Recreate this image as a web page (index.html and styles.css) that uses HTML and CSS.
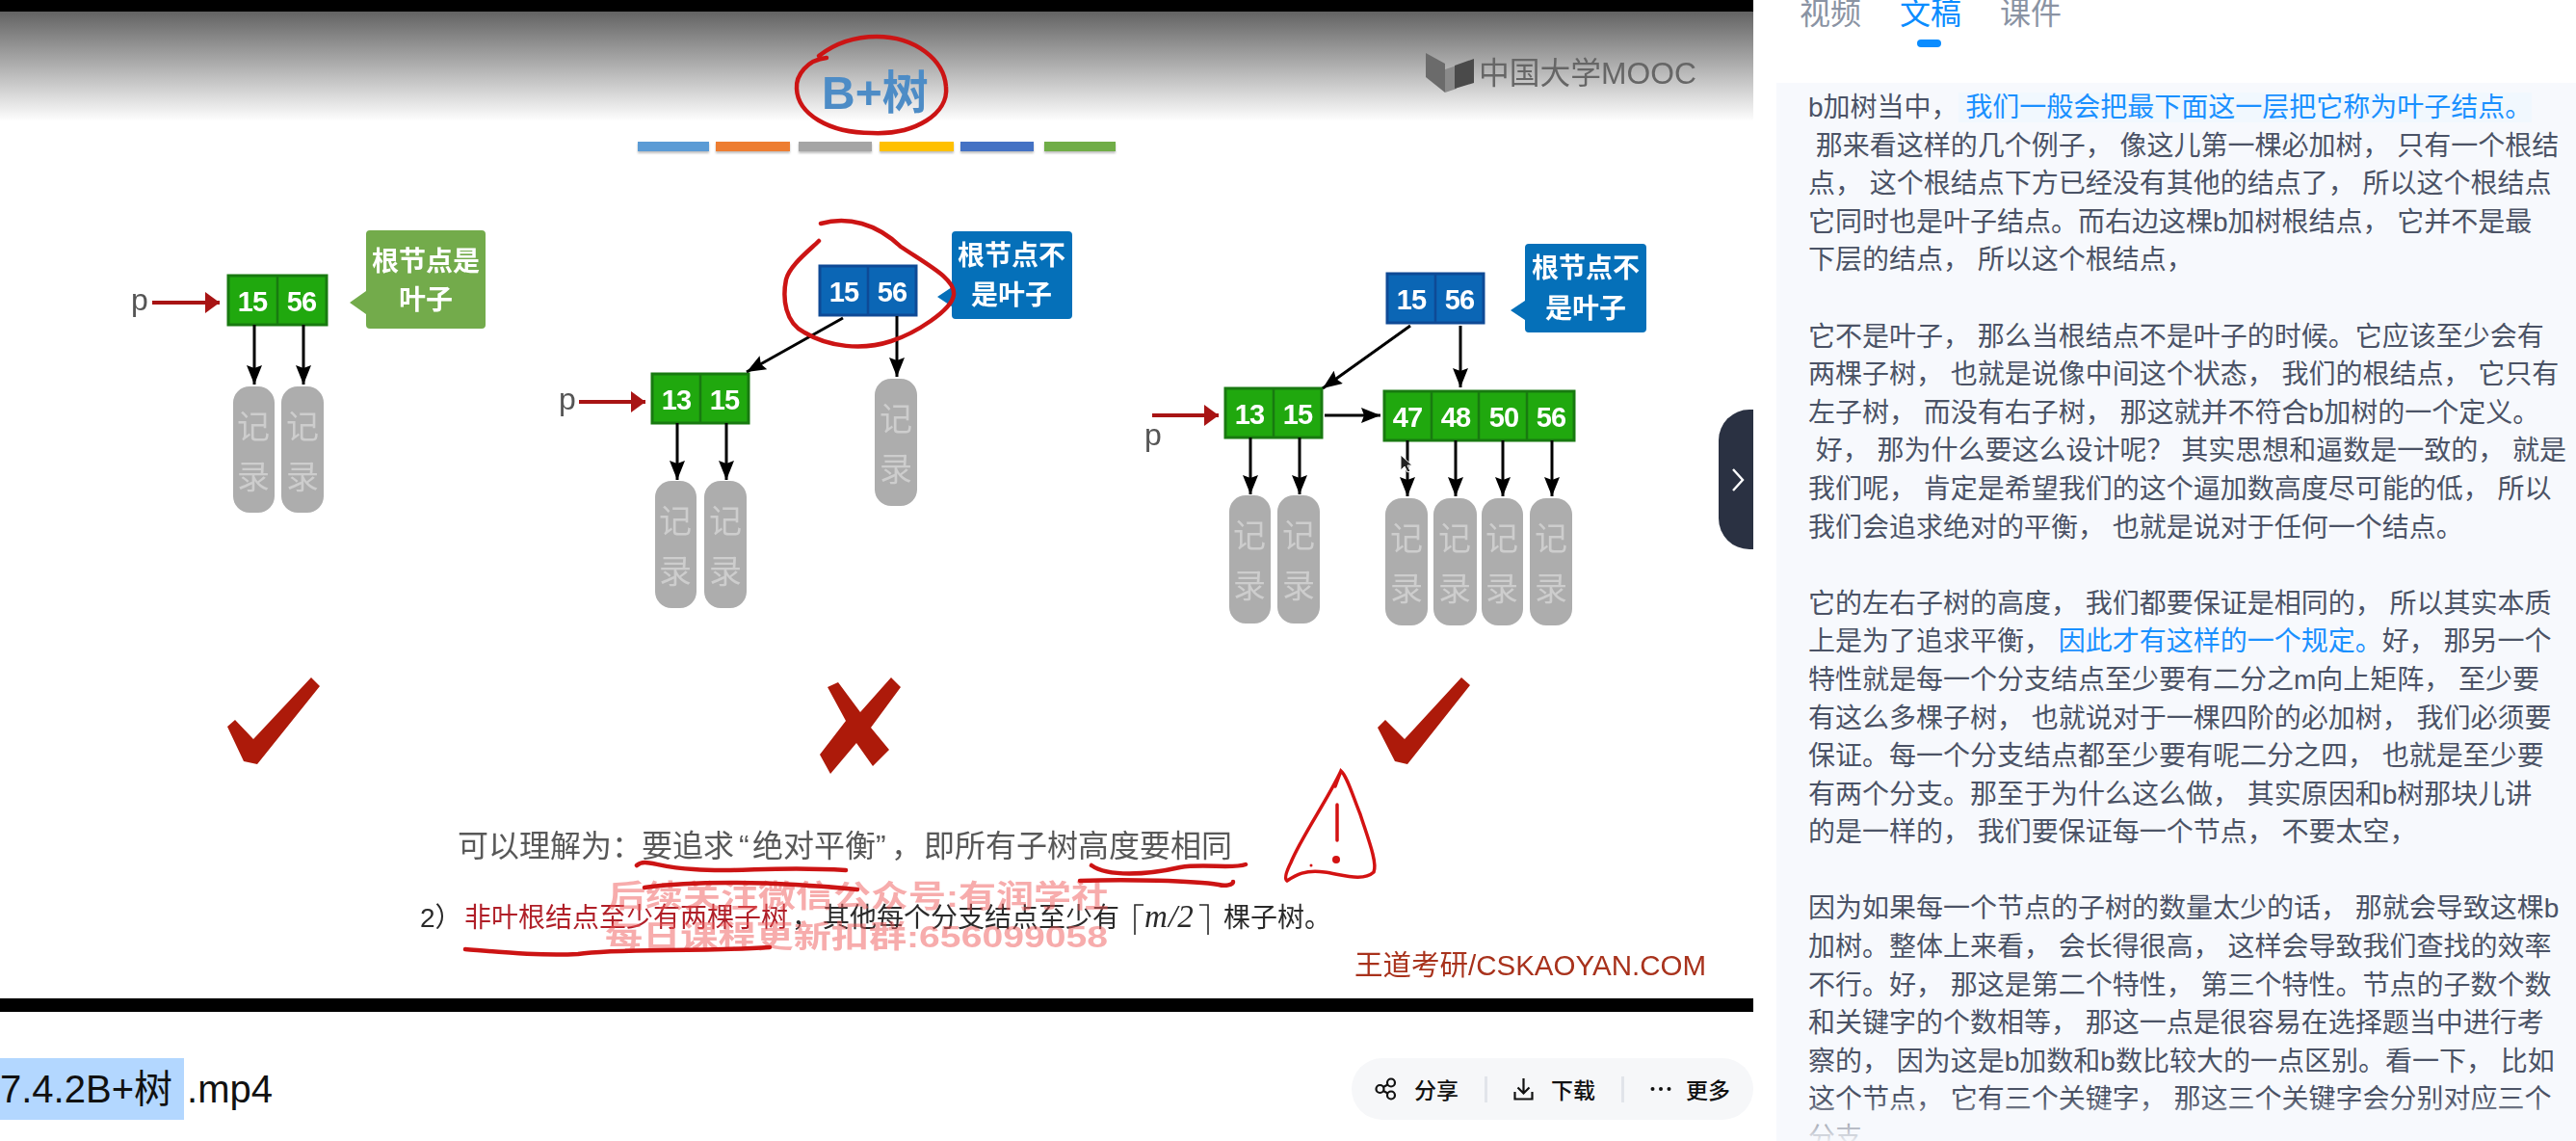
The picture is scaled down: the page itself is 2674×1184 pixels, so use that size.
FILE: index.html
```html
<!DOCTYPE html>
<html lang="zh-CN">
<head>
<meta charset="utf-8">
<title>7.4.2B+树</title>
<link rel="stylesheet" href="styles.css">
</head>
<body>
<div class="page">
  <main class="main">
    <section class="video">
      <svg class="slide" viewBox="0 12 1820 1024" width="1820" height="1024" xmlns="http://www.w3.org/2000/svg">
        <defs>
          <linearGradient id="head" x1="0" y1="0" x2="0" y2="1">
            <stop offset="0" stop-color="#636363"/>
            <stop offset="0.45" stop-color="#a8a8a8"/>
            <stop offset="1" stop-color="#ffffff"/>
          </linearGradient>
          <marker id="ah" markerUnits="userSpaceOnUse" markerWidth="20" markerHeight="22" refX="20" refY="8" orient="auto">
            <path d="M0 0L20 8L0 16L3 8Z" fill="#000"/>
          </marker>
          <marker id="ar" markerUnits="userSpaceOnUse" markerWidth="16" markerHeight="24" refX="15" refY="11" orient="auto">
            <path d="M0 0L15 11L0 22Z" fill="#a81414"/>
          </marker>
        </defs>
        <rect x="0" y="12" width="1820" height="1024" fill="#fff"/>
        <rect x="0" y="12" width="1820" height="114" fill="url(#head)"/>

        <text class="title" x="853" y="113">B+树</text>
        <rect class="bar" x="662" y="147" width="74" height="10" fill="#5b9bd5"/>
        <rect class="bar" x="743" y="147" width="77" height="10" fill="#ed7d31"/>
        <rect class="bar" x="829" y="147" width="76" height="10" fill="#a5a5a5"/>
        <rect class="bar" x="913" y="147" width="77" height="10" fill="#ffc000"/>
        <rect class="bar" x="997" y="147" width="76" height="10" fill="#4472c4"/>
        <rect class="bar" x="1084" y="147" width="74" height="10" fill="#70ad47"/>

        <path d="M1480 55L1500 66V96L1480 80Z" fill="#6b6b6b"/>
        <path d="M1500 72L1512 68V92L1500 96Z" fill="#8a8a8a"/>
        <path d="M1510 68L1530 61V86L1510 92Z" fill="#4a4a4a"/>
        <text class="logo" x="1535" y="87" textLength="226" lengthAdjust="spacingAndGlyphs">中国大学MOOC</text>

        <!-- left tree -->
        <text class="pee" x="136" y="322">p</text>
        <line class="red" x1="158" y1="314" x2="228" y2="314" marker-end="url(#ar)"/>
        <rect class="node-g" x="237" y="286" width="102" height="51"/>
        <line class="div-g" x1="288" y1="286" x2="288" y2="337"/>
        <text class="num" x="262" y="323">15</text><text class="num" x="313" y="323">56</text>
        <path class="call-g" d="M384 239H500a4 4 0 0 1 4 4V337a4 4 0 0 1-4 4H384a4 4 0 0 1-4-4V326L363 314L380 302V243a4 4 0 0 1 4-4Z"/>
        <text class="call" x="442" y="281">根节点是</text><text class="call" x="442" y="321">叶子</text>
        <line class="blk" x1="264" y1="337" x2="264" y2="399" marker-end="url(#ah)"/>
        <line class="blk" x1="315" y1="337" x2="315" y2="399" marker-end="url(#ah)"/>
        <g transform="translate(242 401)"><rect class="rec" width="43" height="131" rx="17"/><text class="rect" x="21" y="54">记</text><text class="rect" x="21" y="106">录</text></g>
        <g transform="translate(292 401)"><rect class="rec" width="44" height="131" rx="17"/><text class="rect" x="22" y="54">记</text><text class="rect" x="22" y="106">录</text></g>

        <!-- middle tree -->
        <text class="pee" x="580" y="425">p</text>
        <line class="red" x1="601" y1="417" x2="670" y2="417" marker-end="url(#ar)"/>
        <rect class="node-g" x="677" y="388" width="100" height="51"/>
        <line class="div-g" x1="727" y1="388" x2="727" y2="439"/>
        <text class="num" x="702" y="425">13</text><text class="num" x="752" y="425">15</text>
        <rect class="node-b" x="851" y="276" width="100" height="51"/>
        <line class="div-b" x1="901" y1="276" x2="901" y2="327"/>
        <text class="num" x="876" y="313">15</text><text class="num" x="926" y="313">56</text>
        <path class="call-b" d="M992 240H1109a4 4 0 0 1 4 4V327a4 4 0 0 1-4 4H992a4 4 0 0 1-4-4V318L973 308L988 298V244a4 4 0 0 1 4-4Z"/>
        <text class="call" x="1050" y="275">根节点不</text><text class="call" x="1050" y="316">是叶子</text>
        <line class="blk" x1="875" y1="330" x2="775" y2="386" marker-end="url(#ah)"/>
        <line class="blk" x1="931" y1="328" x2="931" y2="391" marker-end="url(#ah)"/>
        <line class="blk" x1="703" y1="439" x2="703" y2="498" marker-end="url(#ah)"/>
        <line class="blk" x1="754" y1="439" x2="754" y2="498" marker-end="url(#ah)"/>
        <g transform="translate(680 499)"><rect class="rec" width="43" height="132" rx="17"/><text class="rect" x="21" y="54">记</text><text class="rect" x="21" y="106">录</text></g>
        <g transform="translate(731 499)"><rect class="rec" width="44" height="132" rx="17"/><text class="rect" x="22" y="54">记</text><text class="rect" x="22" y="106">录</text></g>
        <g transform="translate(908 393)"><rect class="rec" width="44" height="132" rx="17"/><text class="rect" x="22" y="54">记</text><text class="rect" x="22" y="106">录</text></g>

        <!-- right tree -->
        <text class="pee" x="1188" y="462">p</text>
        <line class="red" x1="1196" y1="431" x2="1265" y2="431" marker-end="url(#ar)"/>
        <rect class="node-g" x="1272" y="403" width="100" height="51"/>
        <line class="div-g" x1="1322" y1="403" x2="1322" y2="454"/>
        <text class="num" x="1297" y="440">13</text><text class="num" x="1347" y="440">15</text>
        <line class="blk" x1="1375" y1="431" x2="1433" y2="431" marker-end="url(#ah)"/>
        <rect class="node-g" x="1437" y="406" width="197" height="51"/>
        <line class="div-g" x1="1486" y1="406" x2="1486" y2="457"/>
        <line class="div-g" x1="1535" y1="406" x2="1535" y2="457"/>
        <line class="div-g" x1="1585" y1="406" x2="1585" y2="457"/>
        <text class="num" x="1461" y="443">47</text><text class="num" x="1511" y="443">48</text><text class="num" x="1561" y="443">50</text><text class="num" x="1610" y="443">56</text>
        <rect class="node-b" x="1440" y="284" width="100" height="51"/>
        <line class="div-b" x1="1490" y1="284" x2="1490" y2="335"/>
        <text class="num" x="1465" y="321">15</text><text class="num" x="1515" y="321">56</text>
        <path class="call-b" d="M1587 253H1705a4 4 0 0 1 4 4V341a4 4 0 0 1-4 4H1587a4 4 0 0 1-4-4V332L1568 322L1583 312V257a4 4 0 0 1 4-4Z"/>
        <text class="call" x="1646" y="288">根节点不</text><text class="call" x="1646" y="330">是叶子</text>
        <line class="blk" x1="1464" y1="338" x2="1373" y2="403" marker-end="url(#ah)"/>
        <line class="blk" x1="1516" y1="338" x2="1516" y2="402" marker-end="url(#ah)"/>
        <line class="blk" x1="1298" y1="454" x2="1298" y2="513" marker-end="url(#ah)"/>
        <line class="blk" x1="1349" y1="454" x2="1349" y2="513" marker-end="url(#ah)"/>
        <line class="blk" x1="1461" y1="457" x2="1461" y2="515" marker-end="url(#ah)"/>
        <line class="blk" x1="1511" y1="457" x2="1511" y2="515" marker-end="url(#ah)"/>
        <line class="blk" x1="1560" y1="457" x2="1560" y2="515" marker-end="url(#ah)"/>
        <line class="blk" x1="1611" y1="457" x2="1611" y2="515" marker-end="url(#ah)"/>
        <g transform="translate(1276 514)"><rect class="rec" width="43" height="133" rx="17"/><text class="rect" x="21" y="54">记</text><text class="rect" x="21" y="106">录</text></g>
        <g transform="translate(1326 514)"><rect class="rec" width="44" height="133" rx="17"/><text class="rect" x="22" y="54">记</text><text class="rect" x="22" y="106">录</text></g>
        <g transform="translate(1438 517)"><rect class="rec" width="44" height="132" rx="17"/><text class="rect" x="22" y="54">记</text><text class="rect" x="22" y="106">录</text></g>
        <g transform="translate(1488 517)"><rect class="rec" width="45" height="132" rx="17"/><text class="rect" x="22" y="54">记</text><text class="rect" x="22" y="106">录</text></g>
        <g transform="translate(1538 517)"><rect class="rec" width="43" height="132" rx="17"/><text class="rect" x="21" y="54">记</text><text class="rect" x="21" y="106">录</text></g>
        <g transform="translate(1588 517)"><rect class="rec" width="44" height="132" rx="17"/><text class="rect" x="22" y="54">记</text><text class="rect" x="22" y="106">录</text></g>
        <path d="M1454 472V488L1458 484L1461 490L1464 489L1461 483H1466Z" fill="#222" stroke="#fff"/>

        <!-- verdict marks -->
        <path class="mark" d="M236 754L244 747L263 767L323 703L332 712L267 793L253 790Z"/>
        <path class="mark" d="M1430 755L1438 747L1458 767L1517 703L1526 711L1461 793L1448 790Z"/>
        <path class="mark" d="M859 713L870 708L893 739L925 703L935 713L904 755L923 778L906 795L889 771L862 803L851 783L878 748Z"/>

        <!-- text -->
        <text class="line1"><tspan x="475" y="889">可以理解为&#65306;</tspan><tspan x="666" y="889">要追求</tspan><tspan x="767" y="889">“</tspan><tspan x="781" y="889">绝对平衡</tspan><tspan x="909" y="889">”</tspan><tspan x="925" y="889">&#65292;</tspan><tspan x="959" y="889">即所有子树高度要相同</tspan></text>
        <text class="line2"><tspan x="436" y="962">2&#65289;</tspan><tspan class="line2-red" x="482" y="962">非叶根结点至少有两棵子树</tspan><tspan x="822" y="962">&#65292;</tspan><tspan x="854" y="962">其他每个分支结点至少有</tspan><tspan class="math-i" x="1188" y="962">m</tspan><tspan class="math" x="1213" y="962">/2</tspan><tspan x="1270" y="962">棵子树。</tspan></text>
        <path class="bracket" d="M1187 939H1178V970M1245 939H1254V970"/>
        <text class="wm" x="631" y="941" textLength="520" lengthAdjust="spacingAndGlyphs">后续关注微信公众号:有润学社</text>
        <text class="wm" x="628" y="983" textLength="522" lengthAdjust="spacingAndGlyphs">每日课程更新扣群:656099058</text>
        <text class="brand" x="1406" y="1012" textLength="365" lengthAdjust="spacingAndGlyphs">王道考研/CSKAOYAN.COM</text>

        <!-- handwriting -->
        <path class="ink" d="M858 60C838 62 826 78 827 92C828 118 860 138 905 138C950 140 985 118 982 90C980 62 950 38 910 38C890 38 868 44 850 58"/>
        <path class="ink" d="M852 232C880 224 910 232 935 256C965 276 992 290 990 306C988 322 950 346 925 354C895 364 860 360 835 345C815 335 812 310 816 290C820 275 840 260 850 250"/>
        <path class="ink" d="M661 898C670 890 680 900 720 902C770 906 800 898 878 903"/>
        <path class="ink" d="M669 921C720 914 800 914 890 923"/>
        <path class="ink" d="M1133 898C1150 910 1190 908 1225 900C1250 896 1280 902 1293 897"/>
        <path class="ink" d="M1121 914C1170 912 1240 914 1265 918C1272 920 1280 918 1280 915"/>
        <path class="ink" d="M483 985C520 988 560 992 600 990C640 984 720 988 799 983"/>
        <path class="ink-thin" d="M1392 800C1378 830 1350 870 1340 895C1335 905 1333 912 1336 914C1345 908 1355 902 1375 905C1395 908 1415 915 1426 905C1430 895 1420 870 1412 845C1404 825 1398 805 1392 800L1386 816"/>
        <path class="ink-thin" d="M1388 835V872"/>
        <circle class="dot" cx="1387" cy="892" r="4"/>
        <circle class="dot" cx="1361" cy="898" r="1.5"/>
      </svg>
      <button class="handle" aria-label="收起">
        <svg width="16" height="26" viewBox="0 0 16 26" xmlns="http://www.w3.org/2000/svg"><path d="M3 2L13 13L3 24" fill="none" stroke="#fff" stroke-width="2.4"/></svg>
      </button>
    </section>
    <div class="info">
      <h1 class="file"><span class="selected">7.4.2B+树</span><span class="ext">.mp4</span></h1>
      <div class="actions">
        <span class="action">
          <svg class="icon" width="23" height="24" viewBox="0 0 23 24" xmlns="http://www.w3.org/2000/svg"><g fill="none" stroke="#111" stroke-width="2.2"><circle cx="5.5" cy="12" r="4"/><circle cx="17" cy="5.5" r="4"/><circle cx="17" cy="18.5" r="4"/><path d="M9 10L13.5 7.5M9 14L13.5 16.5"/></g></svg>
          <span>分享</span>
        </span>
        <i class="sep"></i>
        <span class="action">
          <svg class="icon" width="21" height="24" viewBox="0 0 21 24" xmlns="http://www.w3.org/2000/svg"><path d="M10.5 1V16M4.5 10.5L10.5 16.5L16.5 10.5M1.5 15V22.5H19.5V15" fill="none" stroke="#111" stroke-width="2.2"/></svg>
          <span>下载</span>
        </span>
        <i class="sep"></i>
        <span class="action action-more">
          <svg class="icon" width="22" height="6" viewBox="0 0 22 6" xmlns="http://www.w3.org/2000/svg"><circle cx="2.5" cy="3" r="2" fill="#111"/><circle cx="11" cy="3" r="2" fill="#111"/><circle cx="19.5" cy="3" r="2" fill="#111"/></svg>
          <span>更多</span>
        </span>
      </div>
    </div>
  </main>
  <aside class="side">
    <nav class="tabs">
      <span class="tab">视频</span>
      <span class="tab tab-on">文稿</span>
      <span class="tab">课件</span>
    </nav>
    <article class="script">
      <p>b加树当中&#65292;<mark class="hl hl-box"> 我们一般会把最下面这一层把它称为叶子结点。</mark><br>&nbsp;那来看这样的几个例子&#65292; 像这儿第一棵必加树&#65292; 只有一个根结<br>点&#65292; 这个根结点下方已经没有其他的结点了&#65292; 所以这个根结点<br>它同时也是叶子结点。而右边这棵b加树根结点&#65292; 它并不是最<br>下层的结点&#65292; 所以这个根结点&#65292;</p>
      <p>它不是叶子&#65292; 那么当根结点不是叶子的时候。它应该至少会有<br>两棵子树&#65292; 也就是说像中间这个状态&#65292; 我们的根结点&#65292; 它只有<br>左子树&#65292; 而没有右子树&#65292; 那这就并不符合b加树的一个定义。<br>&nbsp;好&#65292; 那为什么要这么设计呢&#65311; 其实思想和逼数是一致的&#65292; 就是<br>我们呢&#65292; 肯定是希望我们的这个逼加数高度尽可能的低&#65292; 所以<br>我们会追求绝对的平衡&#65292; 也就是说对于任何一个结点。</p>
      <p>它的左右子树的高度&#65292; 我们都要保证是相同的&#65292; 所以其实本质<br>上是为了追求平衡&#65292;<mark class="hl"> 因此才有这样的一个规定。</mark>好&#65292; 那另一个<br>特性就是每一个分支结点至少要有二分之m向上矩阵&#65292; 至少要<br>有这么多棵子树&#65292; 也就说对于一棵四阶的必加树&#65292; 我们必须要<br>保证。每一个分支结点都至少要有呢二分之四&#65292; 也就是至少要<br>有两个分支。那至于为什么这么做&#65292; 其实原因和b树那块儿讲<br>的是一样的&#65292; 我们要保证每一个节点&#65292; 不要太空&#65292;</p>
      <p>因为如果每一个节点的子树的数量太少的话&#65292; 那就会导致这棵b<br>加树。整体上来看&#65292; 会长得很高&#65292; 这样会导致我们查找的效率<br>不行。好&#65292; 那这是第二个特性&#65292; 第三个特性。节点的子数个数<br>和关键字的个数相等&#65292; 那这一点是很容易在选择题当中进行考<br>察的&#65292; 因为这是b加数和b数比较大的一点区别。看一下&#65292; 比如<br>这个节点&#65292; 它有三个关键字&#65292; 那这三个关键字会分别对应三个<br>分支</p>
    </article>
  </aside>
</div>
</body>
</html>
```
FILE: styles.css
```css
* { box-sizing: border-box; }
html, body { margin: 0; height: 100%; background: #fff; overflow: hidden; }
body { font-family: "Liberation Sans", "Noto Sans CJK SC", sans-serif; color: #111; }

.page { display: flex; width: 2674px; height: 1184px; overflow: hidden; }
.main { width: 1820px; flex: none; display: flex; flex-direction: column; }

.video { position: relative; height: 1050px; background: #000; padding: 12px 0 14px; }
.slide { display: block; filter: blur(0.7px); }
.handle { position: absolute; right: 0; top: 425px; width: 36px; height: 145px; border: 0; padding: 0 0 0 4px; background: #2a3142; border-radius: 32px 0 0 32px; display: flex; align-items: center; justify-content: center; }

.slide text { font-family: "Liberation Sans", "Noto Sans CJK SC", sans-serif; }
.title { font-size: 48px; font-weight: 700; fill: #4d8cc6; }
.logo { font-size: 32px; fill: #666; }
.bar { filter: drop-shadow(0 2px 1px rgba(0,0,0,.25)); }
.pee { font-size: 32px; fill: #555; }
.red { stroke: #a81414; stroke-width: 4; }
.blk { stroke: #000; stroke-width: 3; }
.node-g { fill: #20a80e; stroke: #187a10; stroke-width: 3; }
.node-b { fill: #0b66b5; stroke: #0e4a96; stroke-width: 3; }
.div-g { stroke: #187a10; stroke-width: 2.5; }
.div-b { stroke: #0e4a96; stroke-width: 2.5; }
.num { font-size: 29px; font-weight: 700; letter-spacing: -1px; fill: #fff; text-anchor: middle; }
.call-g { fill: #73ab4b; }
.call-b { fill: #0570b9; }
.call { font-size: 28px; font-weight: 700; fill: #fff; text-anchor: middle; }
.rec { fill: #adadad; }
.rect { font-size: 34px; fill: #cdcdcd; text-anchor: middle; }
.mark { fill: #ad1a0a; }
.line1 { font-size: 32px; fill: #585858; }
.line2 { font-size: 28px; fill: #2a2a2a; }
.line2-red { fill: #b01f28; }
.math-i { font-family: "Liberation Serif", serif; font-style: italic; font-size: 33px; }
.math { font-family: "Liberation Serif", serif; font-style: italic; font-size: 33px; }
.bracket { fill: none; stroke: #2a2a2a; stroke-width: 1.6; }
.wm { font-size: 32px; font-weight: 700; fill: rgba(240, 90, 90, .5); }
.brand { font-size: 29px; fill: #a8321c; }
.ink { fill: none; stroke: #cc1414; stroke-width: 4.5; stroke-linecap: round; }
.ink-thin { fill: none; stroke: #d31212; stroke-width: 3.5; stroke-linecap: round; }
.dot { fill: #d31212; }

.info { flex: 1; display: flex; justify-content: space-between; align-items: flex-start; padding-top: 48px; }
.file { margin: 0; font-size: 40px; font-weight: 400; line-height: 64px; color: #111; white-space: nowrap; }
.selected { display: inline-block; height: 64px; background: #b3d7ff; padding-right: 12px; }
.ext { margin-left: 3px; }
.actions { display: flex; align-items: center; width: 417px; height: 64px; padding: 0 24px; border-radius: 32px; background: #f6f7f9; }
.action { display: flex; align-items: center; gap: 18px; font-size: 23px; font-weight: 500; color: #111; }
.action-more { gap: 15px; }
.sep { width: 3px; height: 27px; margin: 0 27px; background: #e1e4ea; flex: none; }

.side { flex: 1; min-width: 0; padding-left: 24px; }
.tabs { display: flex; gap: 40px; height: 92px; margin-top: -6px; padding: 0 0 0 24px; position: relative; }
.tab { font-size: 32px; line-height: 40px; color: #8a93a3; position: relative; height: 40px; }
.tab-on { color: #0a8cff; }
.tab-on::after { content: ""; position: absolute; left: 18px; top: 47px; width: 25px; height: 8px; border-radius: 4px; background: #0a8cff; }
.script { position: relative; height: 1098px; padding: 6px 0 0 33px; background: #f7f9fd; font-size: 28px; line-height: 39.6px; color: #4b5366; white-space: nowrap; overflow: hidden; }
.script p { margin: 0 0 39.6px; }
.script::after { content: ""; position: absolute; left: 0; right: 0; bottom: 0; height: 44px; background: linear-gradient(to bottom, rgba(247,249,253,0), rgba(247,249,253,.9)); }
.hl { background: transparent; color: #1a90ff; }
.hl-box { background: #f1f8fe; }
```
